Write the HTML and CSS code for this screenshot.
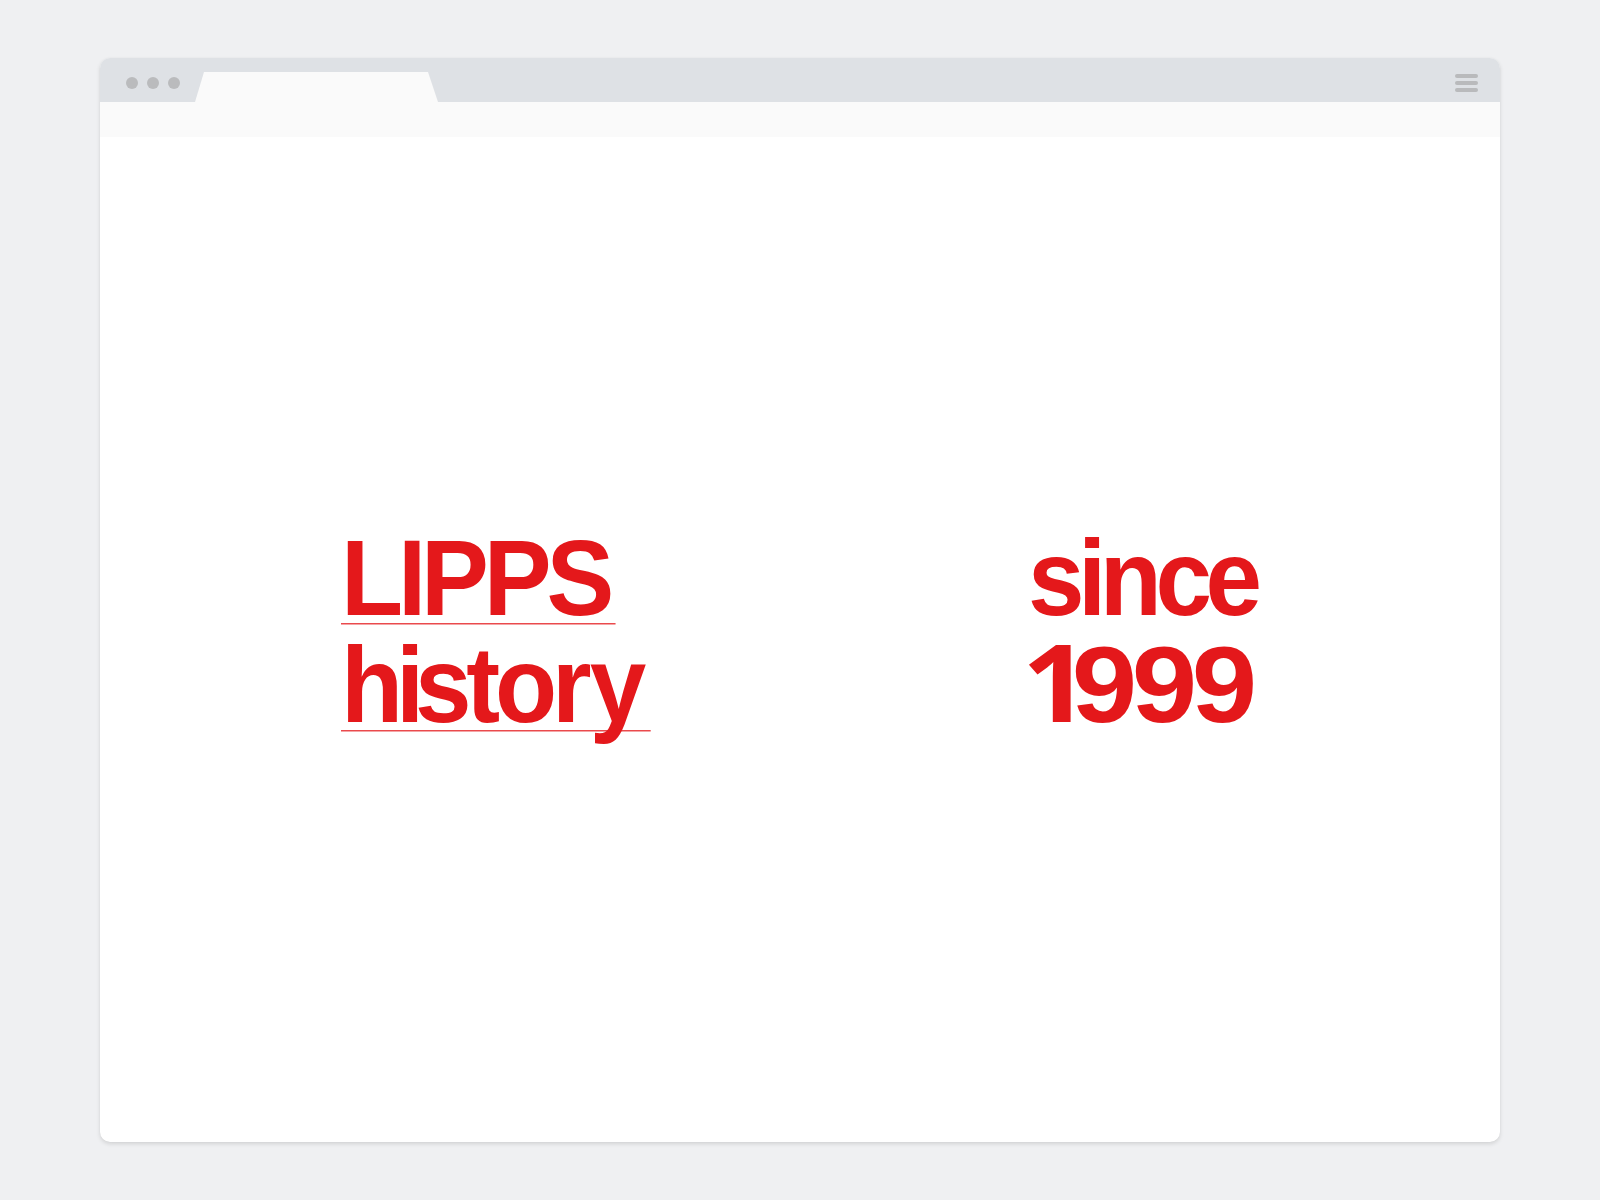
FILE: index.html
```html
<!DOCTYPE html>
<html lang="en">
<head>
<meta charset="utf-8">
<title>LIPPS history since 1999</title>
<link rel="stylesheet" href="styles.css">
</head>
<body>
  <div class="window">
    <div class="tabbar">
      <div class="dots">
        <span class="dot"></span><span class="dot"></span><span class="dot"></span>
      </div>
      <div class="tab"></div>
      <div class="menu">
        <span class="bar"></span><span class="bar"></span><span class="bar"></span>
      </div>
    </div>
    <div class="addressbar"></div>
    <main class="content">
      <div class="block block-left">
        <div class="line underlined word-lipps">LIPPS</div>
        <div class="line underlined word-history">h<span class="kern-i">i</span>stor<span class="kern-y">y</span></div>
      </div>
      <div class="block block-right">
        <div class="line word-since">since</div>
        <div class="line word-year"><span class="digit-one">1</span>999</div>
      </div>
    </main>
  </div>
</body>
</html>
```

FILE: styles.css
```css
* { box-sizing: border-box; }

html, body {
  margin: 0;
  padding: 0;
}

body {
  background: #eff0f2;
  width: 1600px;
  height: 1200px;
  padding: 58px 100px 0 100px;
  font-family: "Liberation Sans", Arial, sans-serif;
}

.window {
  width: 1400px;
  height: 1084px;
  background: #ffffff;
  border-radius: 10px;
  overflow: hidden;
  display: flex;
  flex-direction: column;
  box-shadow: 0 2px 4px rgba(0, 0, 0, 0.12), 0 0 1px rgba(0, 0, 0, 0.08);
}

.tabbar {
  height: 44px;
  padding-top: 6px;
  background: #dee1e5;
  display: flex;
  align-items: center;
  flex-shrink: 0;
}

.dots {
  display: flex;
  gap: 9px;
  padding-left: 26px;
}

.dot {
  width: 12px;
  height: 12px;
  border-radius: 50%;
  background: #babbbd;
}

.tab {
  align-self: flex-end;
  margin-left: 15px;
  width: 243px;
  height: 30px;
  background: #fafafa;
  clip-path: polygon(9px 0, 233px 0, 243px 100%, 0 100%);
}

.menu {
  margin-left: auto;
  margin-right: 22px;
  display: flex;
  flex-direction: column;
  gap: 3px;
}

.bar {
  width: 23px;
  height: 4px;
  border-radius: 2px;
  background: #b9babc;
}

.addressbar {
  height: 35px;
  background: #fafafa;
  flex-shrink: 0;
}

.content {
  flex: 1;
  display: flex;
  justify-content: space-between;
  align-items: center;
  padding: 0 232px 16px 241px;
}

.block {
  display: flex;
  flex-direction: column;
  align-items: flex-start;
}

/* Liberation Sans Bold is a touch wider than the display face in the
   design, so the words are narrowed slightly. */
.line {
  color: #e4181b;
  font-weight: 700;
  font-size: 107px;
  line-height: 107px;
  white-space: nowrap;
  transform: scaleX(0.95);
  transform-origin: left center;
}

.underlined {
  background-image: linear-gradient(#ea4a4d, #ea4a4d);
  background-repeat: no-repeat;
  background-size: 100% 1.5px;
  background-position: 0 98px;
}

.word-lipps {
  letter-spacing: -5.4px;
  padding-right: 7px;
}

.word-history {
  letter-spacing: -5.4px;
  padding-right: 10.4px;
}

.kern-i {
  margin-left: -2px;
  margin-right: -4.5px;
}

.kern-y {
  margin-left: 3.5px;
}

.word-since {
  letter-spacing: -6.8px;
}

/* the figures of the year are set wider than the letters */
.word-year {
  letter-spacing: -5px;
  margin-left: -6px;
  transform: scaleX(1.1);
}

.digit-one {
  font-family: "Noto Sans", "Liberation Sans", sans-serif;
  line-height: 0;
  margin-right: -11px;
}
```
